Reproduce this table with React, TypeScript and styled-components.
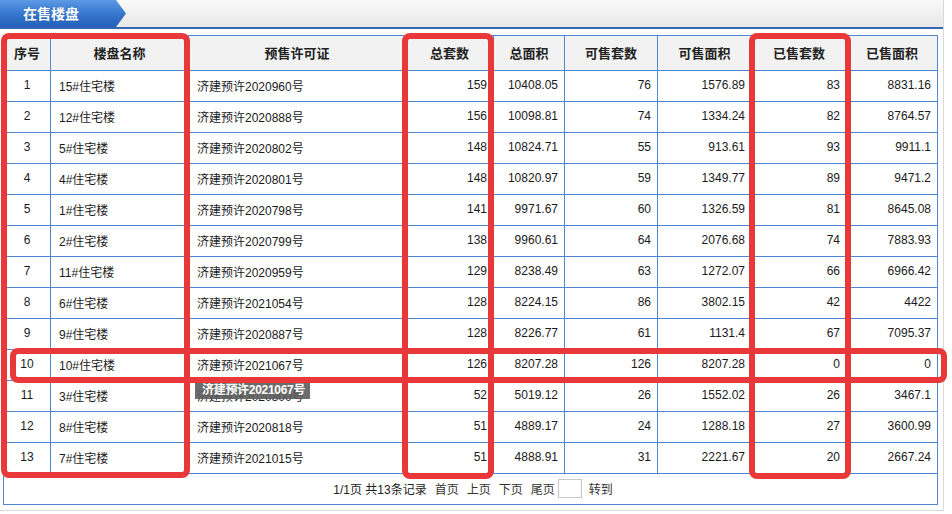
import React from "react";
import styled, { createGlobalStyle } from "styled-components";

const Global = createGlobalStyle`
  html, body { margin: 0; padding: 0; background: #fff; }
  body { font-family: "Liberation Sans", "Noto Sans CJK SC", sans-serif; color: #1a1a1a; }
`;

const Page = styled.div`
  position: relative;
  width: 944px;
  height: 511px;
  box-sizing: border-box;
  border-right: 1px solid #d9d9d9;
  border-bottom: 1px solid #d9d9d9;
  display: flex;
  flex-direction: column;
`;

const TitleBar = styled.div`
  height: 27px;
  flex: none;
  border-bottom: 2px solid #3466b3;
  background: linear-gradient(to bottom, #f9f9f9, #e7e7e7);
  display: flex;
  align-items: stretch;
`;

const Tab = styled.div`
  width: 126px;
  clip-path: polygon(0 0, 116px 0, 126px 50%, 116px 100%, 0 100%);
  background: linear-gradient(to bottom, #5d9be6 0%, #3a7ad0 45%, #2460b8 100%);
  color: #fff;
  font-weight: bold;
  font-size: 14px;
  display: flex;
  align-items: center;
  padding: 0 0 1px 23px;
  box-sizing: border-box;
  text-shadow: 0 0 1px rgba(0, 40, 100, 0.4);
`;

const Body = styled.div`
  flex: 1;
  padding: 6px 5px 5px 3px;
  display: flex;
`;

const Frame = styled.div`
  flex: 1;
  border: 1px solid #4f86d0;
  display: flex;
  flex-direction: column;
`;

const Table = styled.table`
  width: 933px;
  table-layout: fixed;
  border-collapse: separate;
  border-spacing: 0;
  font-size: 12px;
`;

const Th = styled.th`
  height: 35px;
  padding: 0 0 2px;
  box-sizing: border-box;
  background: #f2f2f2;
  font-size: 13px;
  font-weight: bold;
  color: #222;
  text-align: center;
  border-right: 1px solid #4f86d0;
  border-bottom: 1px solid #4f86d0;
  &:last-child { border-right: none; }
`;

const Td = styled.td<{ $align: "left" | "center" | "right" }>`
  height: 31px;
  box-sizing: border-box;
  padding: 0 ${(p) => (p.$align === "right" ? "6px" : "0")} 2px
    ${(p) => (p.$align === "left" ? "8px" : "0")};
  text-align: ${(p) => p.$align};
  white-space: nowrap;
  color: #1a1a1a;
  border-right: 1px solid #4f86d0;
  border-bottom: 1px solid #4f86d0;
  &:last-child { border-right: none; }
`;

const Pager = styled.div`
  flex: 1;
  display: flex;
  align-items: center;
  justify-content: center;
  gap: 8px;
  font-size: 12px;
  color: #222;
  padding: 0 0 1px 5px;
`;

const PagerLink = styled.span`
  color: #333;
  cursor: pointer;
`;

const PageInput = styled.span`
  display: inline-block;
  width: 22px;
  height: 17px;
  border: 1px solid #c8c8c8;
  margin: 0 -1px 0 -5px;
  background: #fff;
`;

const Mark = styled.div<{ $l: number; $t: number; $w: number; $h: number }>`
  position: absolute;
  left: ${(p) => p.$l}px;
  top: ${(p) => p.$t}px;
  width: ${(p) => p.$w}px;
  height: ${(p) => p.$h}px;
  box-sizing: border-box;
  border: 6px solid #e8383a;
  border-radius: 8px;
  z-index: 3;
  pointer-events: none;
`;

const Tip = styled.div`
  position: absolute;
  left: 195px;
  top: 379px;
  height: 20px;
  padding: 0 5px 1px 7px;
  box-sizing: border-box;
  display: flex;
  align-items: center;
  background: rgba(92, 92, 92, 0.9);
  color: #fff;
  font-size: 12px;
  font-weight: bold;
  letter-spacing: -0.3px;
  z-index: 2;
  white-space: nowrap;
`;

const widths = [47, 138, 217, 88, 71, 93, 94, 95, 90];
const heads = ["序号", "楼盘名称", "预售许可证", "总套数", "总面积", "可售套数", "可售面积", "已售套数", "已售面积"];

const rows: string[][] = [
  ["1", "15#住宅楼", "济建预许2020960号", "159", "10408.05", "76", "1576.89", "83", "8831.16"],
  ["2", "12#住宅楼", "济建预许2020888号", "156", "10098.81", "74", "1334.24", "82", "8764.57"],
  ["3", "5#住宅楼", "济建预许2020802号", "148", "10824.71", "55", "913.61", "93", "9911.1"],
  ["4", "4#住宅楼", "济建预许2020801号", "148", "10820.97", "59", "1349.77", "89", "9471.2"],
  ["5", "1#住宅楼", "济建预许2020798号", "141", "9971.67", "60", "1326.59", "81", "8645.08"],
  ["6", "2#住宅楼", "济建预许2020799号", "138", "9960.61", "64", "2076.68", "74", "7883.93"],
  ["7", "11#住宅楼", "济建预许2020959号", "129", "8238.49", "63", "1272.07", "66", "6966.42"],
  ["8", "6#住宅楼", "济建预许2021054号", "128", "8224.15", "86", "3802.15", "42", "4422"],
  ["9", "9#住宅楼", "济建预许2020887号", "128", "8226.77", "61", "1131.4", "67", "7095.37"],
  ["10", "10#住宅楼", "济建预许2021067号", "126", "8207.28", "126", "8207.28", "0", "0"],
  ["11", "3#住宅楼", "济建预许2020800号", "52", "5019.12", "26", "1552.02", "26", "3467.1"],
  ["12", "8#住宅楼", "济建预许2020818号", "51", "4889.17", "24", "1288.18", "27", "3600.99"],
  ["13", "7#住宅楼", "济建预许2021015号", "51", "4888.91", "31", "2221.67", "20", "2667.24"],
];

const alignOf = (i: number): "left" | "center" | "right" =>
  i === 0 ? "center" : i < 3 ? "left" : "right";

export default function App() {
  return (
    <>
      <Global />
      <Page>
        <TitleBar>
          <Tab>在售楼盘</Tab>
        </TitleBar>
        <Body>
          <Frame>
            <Table>
              <colgroup>
                {widths.map((w, i) => (
                  <col key={i} style={{ width: w }} />
                ))}
              </colgroup>
              <thead>
                <tr>
                  {heads.map((h) => (
                    <Th key={h}>{h}</Th>
                  ))}
                </tr>
              </thead>
              <tbody>
                {rows.map((r) => (
                  <tr key={r[0]}>
                    {r.map((c, i) => (
                      <Td key={i} $align={alignOf(i)}>
                        {c}
                      </Td>
                    ))}
                  </tr>
                ))}
              </tbody>
            </Table>
            <Pager>
              <span>1/1页 共13条记录</span>
              <PagerLink>首页</PagerLink>
              <PagerLink>上页</PagerLink>
              <PagerLink>下页</PagerLink>
              <PagerLink>尾页</PagerLink>
              <PageInput />
              <PagerLink>转到</PagerLink>
            </Pager>
          </Frame>
        </Body>
        <Tip>济建预许2021067号</Tip>
        <Mark $l={1} $t={33} $w={189} $h={445} />
        <Mark $l={402} $t={33} $w={92} $h={446} />
        <Mark $l={749} $t={33} $w={102} $h={446} />
        <Mark $l={10} $t={348} $w={937} $h={35} />
      </Page>
    </>
  );
}
